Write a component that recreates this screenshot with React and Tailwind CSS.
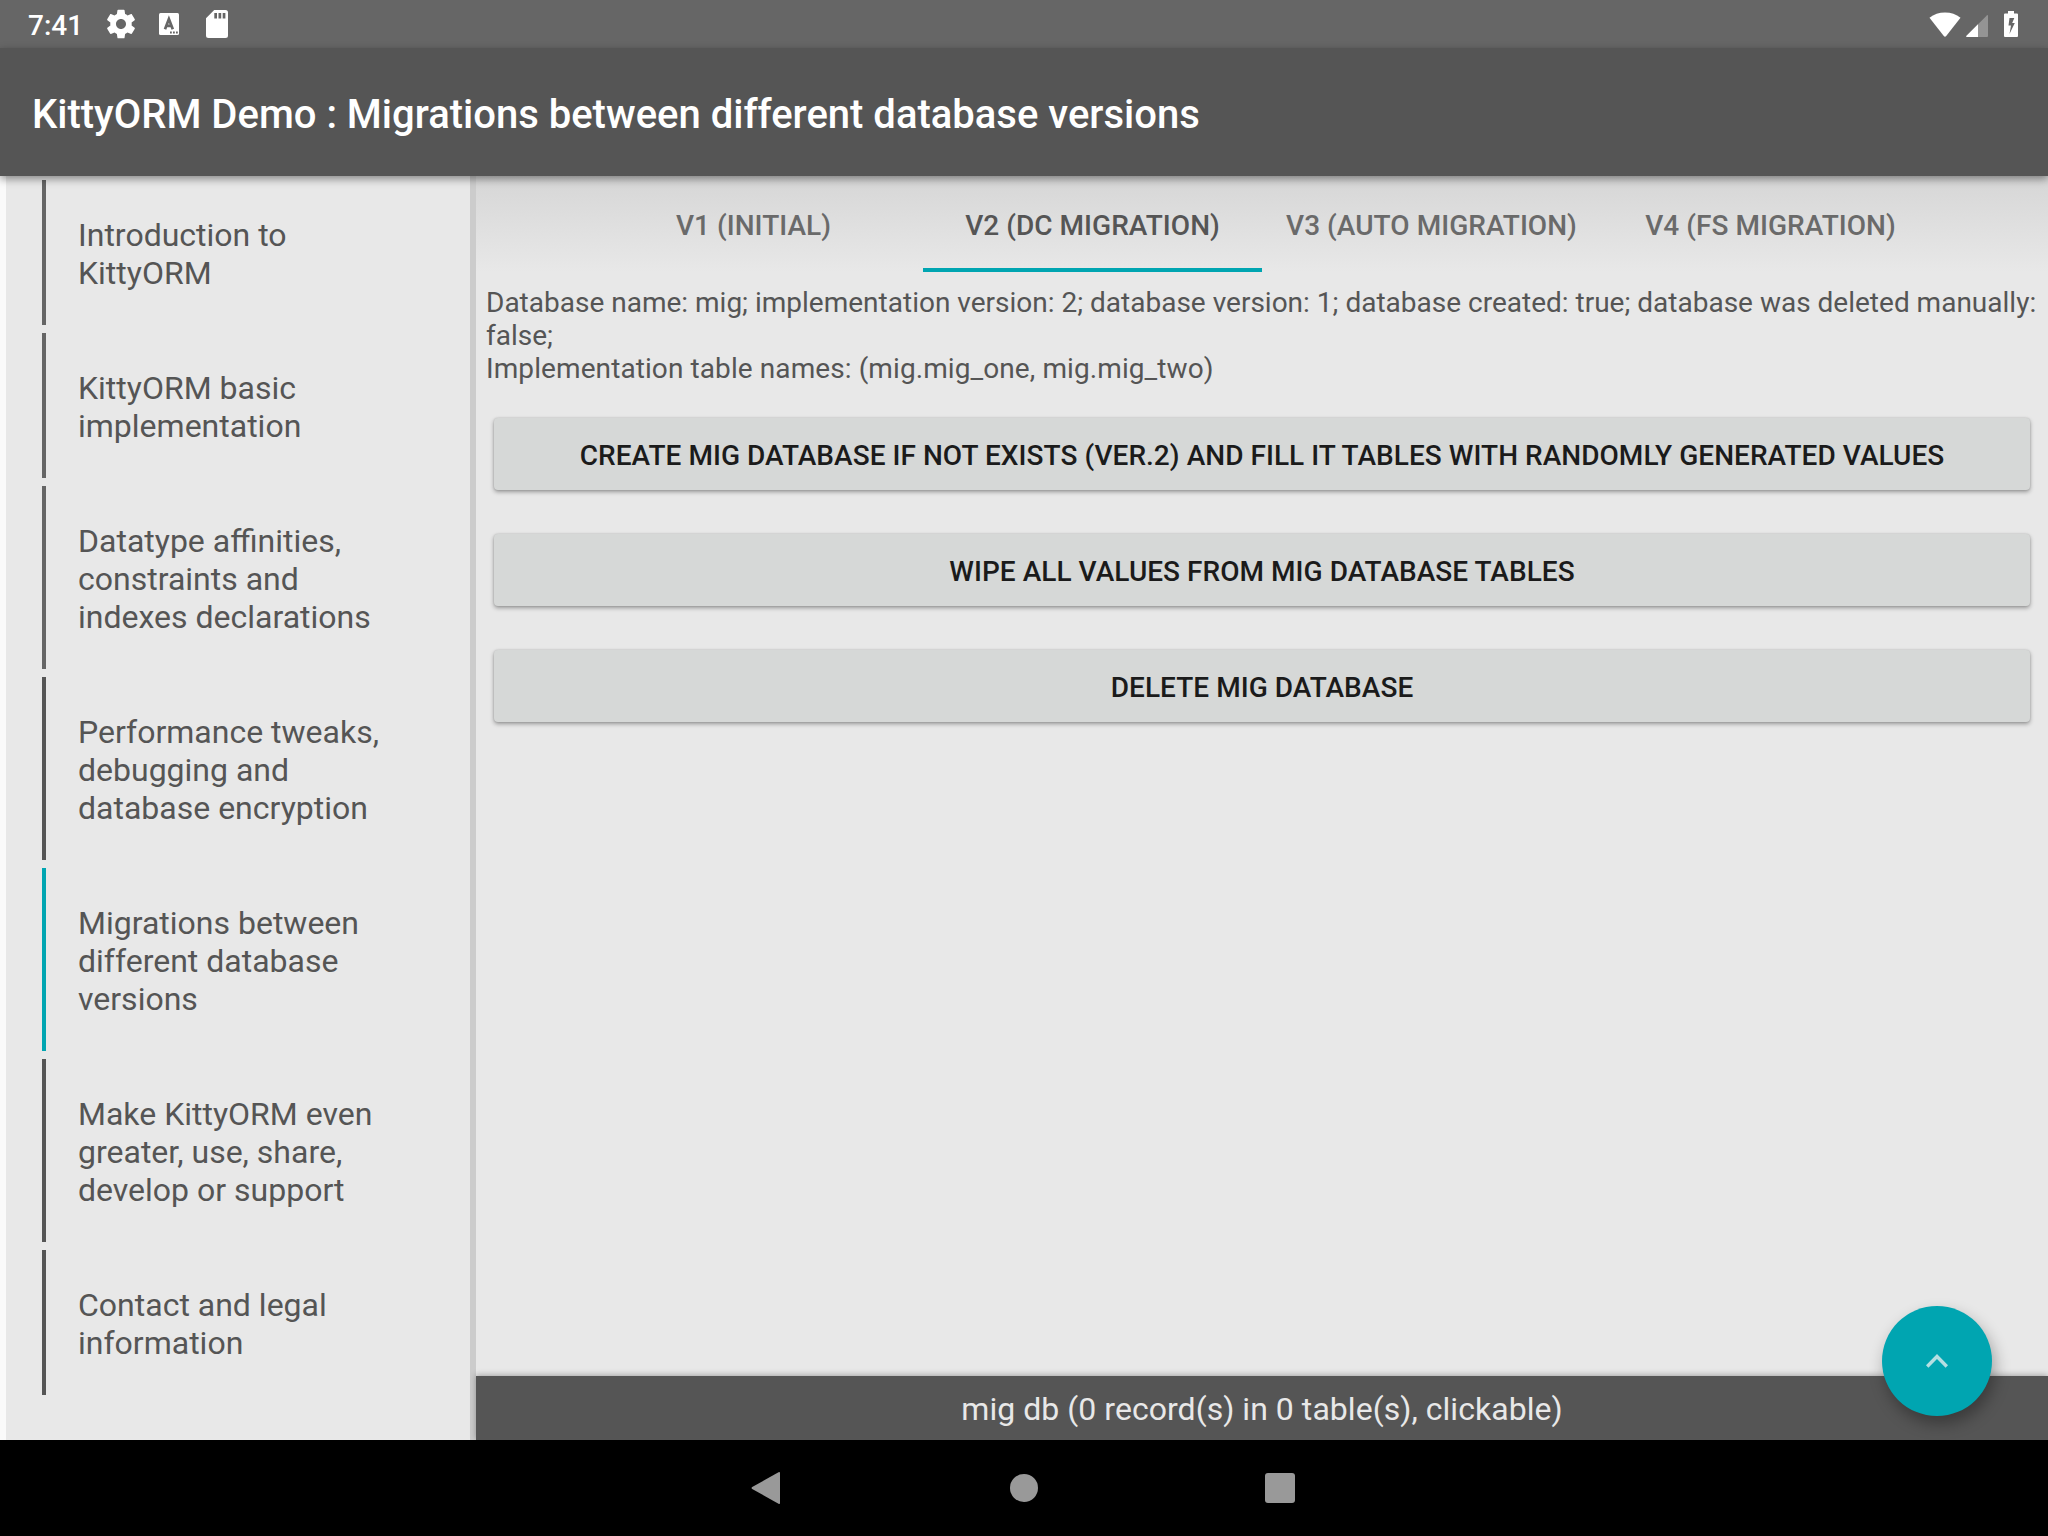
import React from "react";

const items = [
  { lines: ["Introduction to", "KittyORM"], bar: "bg-[#656565]" },
  { lines: ["KittyORM basic", "implementation"], bar: "bg-[#656565]" },
  { lines: ["Datatype affinities,", "constraints and", "indexes declarations"], bar: "bg-[#656565]" },
  { lines: ["Performance tweaks,", "debugging and", "database encryption"], bar: "bg-[#555555]" },
  { lines: ["Migrations between", "different database", "versions"], bar: "bg-[#00a5b1]" },
  { lines: ["Make KittyORM even", "greater, use, share,", "develop or support"], bar: "bg-[#555555]" },
  { lines: ["Contact and legal", "information"], bar: "bg-[#555555]" },
];

const tabs = ["V1 (INITIAL)", "V2 (DC MIGRATION)", "V3 (AUTO MIGRATION)", "V4 (FS MIGRATION)"];

const actions = [
  "CREATE MIG DATABASE IF NOT EXISTS (VER.2) AND FILL IT TABLES WITH RANDOMLY GENERATED VALUES",
  "WIPE ALL VALUES FROM MIG DATABASE TABLES",
  "DELETE MIG DATABASE",
];

function StatusBar() {
  return (
    <div className="flex h-12 shrink-0 items-center justify-between bg-[#666666] pl-7 pr-[17px] text-white">
      <div className="flex items-center">
        <span className="w-[78px] pt-0.5 text-[28px] leading-[33px] font-medium">7:41</span>
        <svg className="h-[30px] w-[30px]" viewBox="1.5 1.5 21 21" fill="#fff">
          <path d="M19.43 12.98c.04-.32.07-.64.07-.98s-.03-.66-.07-.98l2.11-1.65c.19-.15.24-.42.12-.64l-2-3.46c-.12-.22-.39-.3-.61-.22l-2.49 1c-.52-.4-1.08-.73-1.69-.98l-.38-2.65C14.46 2.18 14.25 2 14 2h-4c-.25 0-.46.18-.49.42l-.38 2.65c-.61.25-1.17.59-1.69.98l-2.49-1c-.23-.09-.49 0-.61.22l-2 3.46c-.13.22-.07.49.12.64l2.11 1.65c-.04.32-.07.65-.07.98s.03.66.07.98l-2.11 1.65c-.19.15-.24.42-.12.64l2 3.46c.12.22.39.3.61.22l2.49-1c.52.4 1.08.73 1.69.98l.38 2.65c.03.24.24.42.49.42h4c.25 0 .46-.18.49-.42l.38-2.65c.61-.25 1.17-.59 1.69-.98l2.49 1c.23.09.49 0 .61-.22l2-3.46c.12-.22.07-.49-.12-.64l-2.11-1.65zM12 15.5c-1.93 0-3.5-1.57-3.5-3.5s1.57-3.5 3.5-3.5 3.5 1.57 3.5 3.5-1.57 3.5-3.5 3.5z" />
        </svg>
        <svg className="ml-[23px] h-[22px] w-5" viewBox="0 0 20 22">
          <rect width="20" height="22" rx="1.5" fill="#fff" />
          <path d="M6 16.2 L9.9 6 L13.8 16.2 M7.3 12.8 H12.5" fill="none" stroke="#666" strokeWidth="2.7" />
          <path d="M11 19.5h1.8M14 19.5h1.8M17 19.5h1.8" stroke="#666" strokeWidth="1.8" />
        </svg>
        <svg className="ml-[27px] h-7 w-[22px]" viewBox="0 0 22 28">
          <path fillRule="evenodd" fill="#fff" d="M8.2 0H19.5Q22 0 22 2.5V25.5Q22 28 19.5 28H2.5Q0 28 0 25.5V8.2ZM8.3 3V8.6H11V3ZM12.5 3V8.6H15.2V3ZM16.7 3V8.6H19.4V3Z" />
        </svg>
      </div>
      <div className="flex items-center">
        <svg className="h-[25px] w-8" viewBox="0 0 32 25">
          <path d="M.5 5.8Q7 .5 16 .5T31.500 5.800L17.200 24Q16 25.300 14.800 24Z" fill="#fff" />
        </svg>
        <svg className="mt-[3px] mr-4 ml-[5px] h-[22px] w-[22px]" viewBox="0 0 22 22">
          <path d="M22 1V21Q22 22 21 22H1Q-.5 22 .5 20.8L20.8 .5Q22 -.5 22 1Z" fill="#949494" />
          <path d="M12 9.3V22H1Q-.5 22 .5 20.8Z" fill="#fff" />
        </svg>
        <svg className="mr-[13px] h-[26px] w-[14px]" viewBox="0 0 14 26">
          <path fillRule="evenodd" fill="#fff" d="M4 0H10V2.5H13Q14 2.5 14 3.5V25Q14 26 13 26H1Q0 26 0 25V3.5Q0 2.5 1 2.5H4ZM5.500 7L4.500 14.500H7L5.500 23L10.800 12H8.200L10.300 7Z" />
        </svg>
      </div>
    </div>
  );
}

export default function App() {
  return (
    <div className="flex h-[1536px] w-[2048px] flex-col overflow-hidden bg-[#fafafa] font-['Roboto',sans-serif] text-[#555555]">
      <StatusBar />
      <header className="relative z-10 flex h-32 shrink-0 items-center bg-[#555555] pt-1 pl-8 shadow-[0_3px_8px_rgba(0,0,0,0.42)]">
        <h1 className="text-[40px] leading-[47px] font-medium text-white">
          KittyORM Demo : Migrations between different database versions
        </h1>
      </header>
      <div className="flex h-[1264px] shrink-0">
        <nav className="ml-1.5 flex w-[470px] shrink-0 flex-col gap-2 border-r-[6px] border-[#cccccc] bg-[#e8e8e8] pt-1 pl-9">
          {items.map((item) => (
            <div key={item.lines[0]} className="flex">
              <div className={"w-1 " + item.bar} />
              <div className="pt-9 pb-[33px] pl-8 text-[32px] leading-[38px]">
                {item.lines.map((line) => (
                  <div key={line} className="whitespace-nowrap">{line}</div>
                ))}
              </div>
            </div>
          ))}
        </nav>
        <main className="flex w-[1572px] flex-col bg-[#e8e8e8]">
          <div className="flex h-24 shrink-0 justify-center bg-linear-to-b from-[#d6d6d6] to-[#e8e8e8]">
            {tabs.map((tab, i) => (
              <div
                key={tab}
                className={
                  "flex w-[339px] items-center justify-center border-b-4 pt-1.5 text-[28px] leading-[33px] font-medium tracking-[0.04px] whitespace-nowrap " +
                  (i === 1 ? "border-[#00a5b1] text-[#555555]" : "border-transparent text-[#6a6a6a]")
                }
              >
                {tab}
              </div>
            ))}
          </div>
          <div className="pt-3.5 pl-2.5 text-[28px] leading-[33px] whitespace-nowrap">
            <p>Database name: mig; implementation version: 2; database version: 1; database created: true; database was deleted manually:</p>
            <p>false;</p>
            <p className="tracking-[0.09px]">Implementation table names: (mig.mig_one, mig.mig_two)</p>
          </div>
          <div className="flex flex-1 flex-col gap-11 pt-[33px] pr-[18px] pl-[18px]">
            {actions.map((label) => (
              <button
                key={label}
                className="flex h-[72px] items-center justify-center rounded bg-[#d6d8d7] pt-0.5 text-[28px] leading-[33px] font-medium tracking-[0.04px] text-[#1b1b1b] shadow-[0_2px_4px_rgba(0,0,0,0.35),0_0_2px_rgba(0,0,0,0.15)]"
              >
                {label}
              </button>
            ))}
          </div>
          <footer className="relative flex h-16 shrink-0 items-center justify-center bg-[#555555] pt-0.5 text-[32px] leading-[38px] tracking-[0.04px] text-[#e8e8e8] shadow-[0_-1px_6px_rgba(0,0,0,0.3)]">
            mig db (0 record(s) in 0 table(s), clickable)
            <div className="absolute right-14 bottom-6 flex h-[110px] w-[110px] items-center justify-center rounded-full bg-[#00a5b1] shadow-[3px_8px_16px_rgba(0,0,0,0.32)]">
              <svg className="h-[14px] w-[22px]" viewBox="0 0 22 14">
                <path d="M1.2 12.5L11 2.5L20.8 12.5" fill="none" stroke="#b5dfe2" strokeWidth="3.4" />
              </svg>
            </div>
          </footer>
        </main>
      </div>
      <div className="z-10 flex h-24 shrink-0 items-center justify-center bg-black">
        <div className="flex w-64 justify-center pr-1">
          <svg className="h-8 w-[30px]" viewBox="0 0 30 32">
            <path d="M27.5 .3Q29 -.4 29 1V31Q29 32.400 27.500 31.700L1.200 17Q-.1 16 1.200 15Z" fill="#999999" />
          </svg>
        </div>
        <div className="flex w-64 justify-center">
          <div className="h-7 w-7 rounded-full bg-[#999999]" />
        </div>
        <div className="flex w-64 justify-center">
          <div className="h-[30px] w-[30px] rounded-[3px] bg-[#999999]" />
        </div>
      </div>
    </div>
  );
}
